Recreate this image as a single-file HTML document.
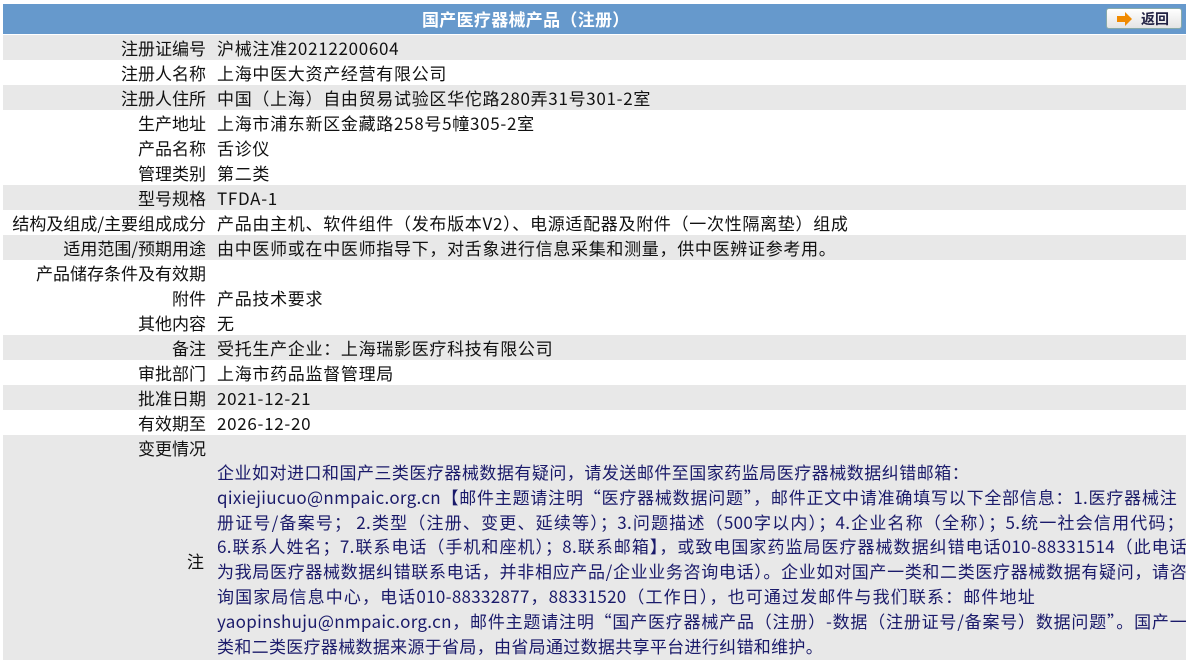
<!DOCTYPE html>
<html><head><meta charset="utf-8"><style>
body{margin:0;width:1186px;height:660px;background:#fff;overflow:hidden;font-family:"Noto Sans CJK SC","Liberation Sans",sans-serif;font-size:17px;color:#111}
.hd{position:absolute;left:3px;top:4px;width:1183px;height:30px;background:#6699cc}
.hd span{position:absolute;left:419px;top:0;color:#fff;font-weight:bold;line-height:30px;font-size:17px;letter-spacing:0.3px}
.btn{position:absolute;left:1106px;top:8px;width:76px;height:21px;border:1px solid #8aa;border-radius:3px;background:linear-gradient(#fff,#e4e4e4);font-size:14px;font-weight:bold;color:#224;line-height:20px;text-align:right;box-sizing:border-box;padding-right:12px}
.btn i{position:absolute;left:10px;top:7px;width:8px;height:6px;background:#f08a00}
.btn i:after{content:"";position:absolute;left:8px;top:-4px;border-left:7px solid #f08a00;border-top:7px solid transparent;border-bottom:7px solid transparent}
.r{position:absolute;left:3px;width:1183px;height:25px;line-height:25px;white-space:nowrap}
.g{background:#e8e8e8}
.l{position:absolute;right:980px;top:0}
.v{position:absolute;left:214px;top:0;letter-spacing:0.7px}
.note{position:absolute;left:3px;top:460px;width:1183px;height:200px;background:#e8e8e8}
.nt{position:absolute;left:214px;top:0;line-height:24.8px;color:#1a1a6a;white-space:nowrap}
.nt div{height:24.8px;text-align:justify;text-align-last:justify;letter-spacing:0.3px}
</style></head><body>
<div class="hd"><span>国产医疗器械产品（注册）</span></div>
<div class="btn"><i></i>返回</div>
<div class="r g" style="top:35px"><span class="l">注册证编号</span><span class="v">沪械注准20212200604</span></div>
<div class="r" style="top:60px"><span class="l">注册人名称</span><span class="v">上海中医大资产经营有限公司</span></div>
<div class="r g" style="top:85px"><span class="l">注册人住所</span><span class="v">中国（上海）自由贸易试验区华佗路280弄31号301-2室</span></div>
<div class="r" style="top:110px"><span class="l">生产地址</span><span class="v">上海市浦东新区金藏路258号5幢305-2室</span></div>
<div class="r" style="top:135px"><span class="l">产品名称</span><span class="v">舌诊仪</span></div>
<div class="r" style="top:160px"><span class="l">管理类别</span><span class="v">第二类</span></div>
<div class="r g" style="top:185px"><span class="l">型号规格</span><span class="v">TFDA-1</span></div>
<div class="r" style="top:210px"><span class="l">结构及组成/主要组成成分</span><span class="v">产品由主机、软件组件（发布版本V2）、电源适配器及附件（一次性隔离垫）组成</span></div>
<div class="r g" style="top:235px"><span class="l">适用范围/预期用途</span><span class="v">由中医师或在中医师指导下，对舌象进行信息采集和测量，供中医辨证参考用。</span></div>
<div class="r" style="top:260px"><span class="l">产品储存条件及有效期</span><span class="v"></span></div>
<div class="r" style="top:285px"><span class="l">附件</span><span class="v">产品技术要求</span></div>
<div class="r" style="top:310px"><span class="l">其他内容</span><span class="v">无</span></div>
<div class="r g" style="top:335px"><span class="l">备注</span><span class="v">受托生产企业：上海瑞影医疗科技有限公司</span></div>
<div class="r" style="top:360px"><span class="l">审批部门</span><span class="v">上海市药品监督管理局</span></div>
<div class="r g" style="top:385px"><span class="l">批准日期</span><span class="v">2021-12-21</span></div>
<div class="r" style="top:410px"><span class="l">有效期至</span><span class="v">2026-12-20</span></div>
<div class="r g" style="top:435px"><span class="l">变更情况</span></div>
<div class="note"><div class="r" style="top:88px;background:none;left:0"><span class="l" style="right:982px">注</span></div>
<div class="nt">
<div style="width:752px">企业如对进口和国产三类医疗器械数据有疑问，请发送邮件至国家药监局医疗器械数据纠错邮箱：</div>
<div style="width:960px">qixiejiucuo@nmpaic.org.cn【邮件主题请注明“医疗器械数据问题”，邮件正文中请准确填写以下全部信息：1.医疗器械注</div>
<div style="width:967px">册证号/备案号； 2.类型（注册、变更、延续等）；3.问题描述（500字以内）；4.企业名称（全称）；5.统一社会信用代码；</div>
<div style="width:970px">6.联系人姓名；7.联系电话（手机和座机）；8.联系邮箱】，或致电国家药监局医疗器械数据纠错电话010-88331514（此电话</div>
<div style="width:970px">为我局医疗器械数据纠错联系电话，并非相应产品/企业业务咨询电话）。企业如对国产一类和二类医疗器械数据有疑问，请咨</div>
<div style="width:818px">询国家局信息中心，电话010-88332877，88331520（工作日），也可通过发邮件与我们联系：邮件地址</div>
<div style="width:970px">yaopinshuju@nmpaic.org.cn，邮件主题请注明“国产医疗器械产品（注册）-数据（注册证号/备案号）数据问题”。国产一</div>
<div style="width:606px">类和二类医疗器械数据来源于省局，由省局通过数据共享平台进行纠错和维护。</div>
</div></div>
</body></html>
